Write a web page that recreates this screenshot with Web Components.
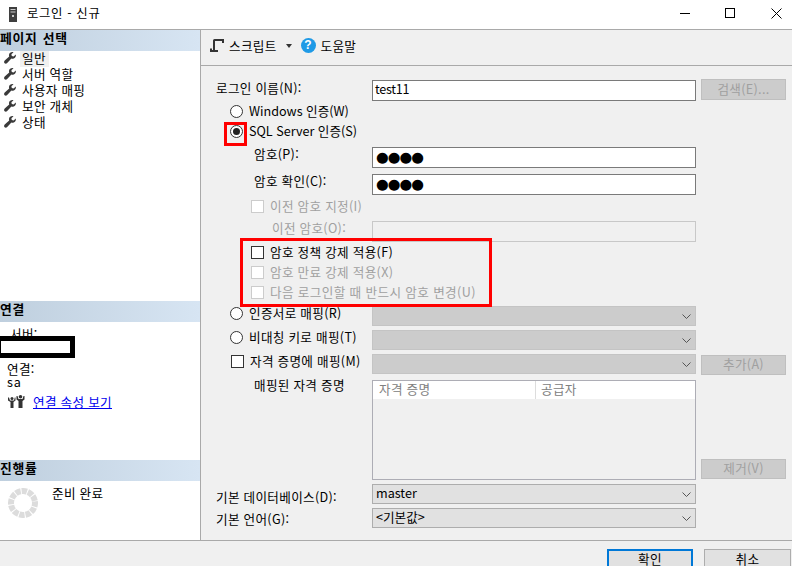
<!DOCTYPE html>
<html lang="ko"><head><meta charset="utf-8"><title>로그인 - 신규</title>
<style>
html,body{margin:0;padding:0;background:#fff}
body{font:12.6px/16px "Noto Sans CJK KR","Noto Sans",sans-serif;letter-spacing:.3px;color:#000;width:792px;height:566px;overflow:hidden}
span[slot=label]{display:block}
</style></head><body>
<login-dialog>
  <title-bar slot="title">로그인 - 신규</title-bar>
  <side-panel slot="side">
    <side-section slot="pages" heading="페이지 선택" style="height:271px">
      <page-item selected>일반</page-item>
      <page-item>서버 역할</page-item>
      <page-item>사용자 매핑</page-item>
      <page-item>보안 개체</page-item>
      <page-item>상태</page-item>
    </side-section>
    <side-section slot="conn" heading="연결" style="height:159px">
      <conn-info></conn-info>
    </side-section>
    <side-section slot="prog" heading="진행률" style="height:80px">
      <progress-info>준비 완료</progress-info>
    </side-section>
  </side-panel>
  <tool-bar slot="toolbar"></tool-bar>
  <login-form slot="form">
    <form-row style="--h:21px;--m:0px;--t:0px">
      <span slot="label">로그인 이름(N):</span>
      <text-box slot="control" style="letter-spacing:-.3px">test11</text-box>
      <dlg-button slot="action" disabled style="--bh:21px;margin-top:-1px">검색(E)...</dlg-button>
    </form-row>
    <form-row style="--h:20px;--m:1px;--t:1px"><radio-opt slot="label" style="margin-left:14px;letter-spacing:0">Windows 인증(W)</radio-opt></form-row>
    <form-row style="--h:20px;--m:0px;--t:1px">
      <radio-opt slot="label" checked marked style="margin-left:14px;letter-spacing:0">SQL Server 인증(S)</radio-opt>
    </form-row>
    <form-row style="--h:21px;--m:5px;--t:-1px">
      <span slot="label" style="margin-left:38px">암호(P):</span>
      <text-box slot="control" dots>●●●●</text-box>
    </form-row>
    <form-row style="--h:21px;--m:6px;--t:-1px">
      <span slot="label" style="margin-left:38px">암호 확인(C):</span>
      <text-box slot="control" dots>●●●●</text-box>
    </form-row>
    <form-row style="--h:20px;--m:1px;--t:2px"><check-opt slot="label" disabled style="margin-left:35px">이전 암호 지정(I)</check-opt></form-row>
    <form-row style="--h:21px;--m:5px;--t:-1px">
      <span slot="label" style="margin-left:56px;color:#a0a0a0">이전 암호(O):</span>
      <text-box slot="control" disabled></text-box>
    </form-row>
    <policy-group style="--m:1px">
      <form-row style="--h:20px;--m:0px;--t:1px"><check-opt slot="label" style="margin-left:35px">암호 정책 강제 적용(F)</check-opt></form-row>
      <form-row style="--h:20px;--m:0px;--t:1px"><check-opt slot="label" disabled style="margin-left:35px">암호 만료 강제 적용(X)</check-opt></form-row>
      <form-row style="--h:20px;--m:0px;--t:1px"><check-opt slot="label" disabled style="margin-left:35px;letter-spacing:.38px">다음 로그인할 때 반드시 암호 변경(U)</check-opt></form-row>
    </policy-group>
    <form-row style="--h:20px;--m:3px;--t:-1px">
      <radio-opt slot="label" style="margin-left:14px">인증서로 매핑(R)</radio-opt>
      <drop-box slot="control" disabled></drop-box>
    </form-row>
    <form-row style="--h:20px;--m:4px;--t:-1px">
      <radio-opt slot="label" style="margin-left:14px">비대칭 키로 매핑(T)</radio-opt>
      <drop-box slot="control" disabled></drop-box>
    </form-row>
    <form-row style="--h:20px;--m:4px;--t:-1px">
      <check-opt slot="label" style="margin-left:15px">자격 증명에 매핑(M)</check-opt>
      <drop-box slot="control" disabled></drop-box>
      <dlg-button slot="action" disabled style="--bh:20px;margin-top:1px">추가(A)</dlg-button>
    </form-row>
    <form-row style="--h:100px;--m:6px;--t:-3px">
      <span slot="label" style="margin-left:38px">매핑된 자격 증명</span>
      <cred-list slot="control"></cred-list>
      <dlg-button slot="action" disabled style="--bh:20px;margin-top:79px">제거(V)</dlg-button>
    </form-row>
    <form-row style="--h:20px;--m:4px;--t:5px">
      <span slot="label">기본 데이터베이스(D):</span>
      <drop-box slot="control">master</drop-box>
    </form-row>
    <form-row style="--h:20px;--m:4px;--t:3px">
      <span slot="label">기본 언어(G):</span>
      <drop-box slot="control">&lt;기본값&gt;</drop-box>
    </form-row>
  </login-form>
  <foot-bar slot="foot">
    <dlg-button primary style="--bh:24px;--lh:16px;width:86px">확인</dlg-button>
    <dlg-button style="--bh:24px;--lh:18px;width:87px">취소</dlg-button>
  </foot-bar>
</login-dialog>
<script>
function def(name, css, html){
  customElements.define(name, class extends HTMLElement{
    constructor(){super();const r=this.attachShadow({mode:'open'});
      const h=typeof html==='function'?html(this):html;
      r.innerHTML='<style>'+css+'</style>'+h;}
  });
}

def('login-dialog',
 ':host{display:grid;width:792px;height:566px;grid-template-columns:201px 591px;grid-template-rows:30px 36px 474px 26px;overflow:hidden;background:#f0f0f0}'+
 '.t{grid-column:1/3}.s{grid-row:2/4;display:block}.f{grid-column:1/3}',
 '<div class="t"><slot name="title"></slot></div><div class="s"><slot name="side"></slot></div><div><slot name="toolbar"></slot></div><div><slot name="form"></slot></div><div class="f"><slot name="foot"></slot></div>');

def('title-bar',
 ':host{display:flex;align-items:center;height:30px;box-sizing:border-box;background:#fff;border-bottom:1px solid #a9a9a9}'+
 'svg.i{margin:0 10px 1px 9px;flex:none}.x{margin-bottom:3px;flex:1;font-size:12.4px;letter-spacing:.65px}.c{display:flex;flex:none;margin:0 10px 3px 0;gap:35px;align-items:center}',
 '<svg class="i" width="8" height="15" viewBox="0 0 8 15"><rect width="8" height="15" fill="#3f3f3f"/><rect x="1.500" y="2" width="5" height="1" fill="#ccc"/><rect x="1.500" y="4.500" width="5" height="1" fill="#ccc"/><rect x="3" y="8" width="2" height="2" fill="#ccc"/></svg>'+
 '<span class="x"><slot></slot></span><span class="c">'+
 '<svg width="10" height="10"><path d="M0 5.500h10" stroke="#000"/></svg>'+
 '<svg width="10" height="10"><rect x=".5" y=".5" width="9" height="9" fill="none" stroke="#000"/></svg>'+
 '<svg width="11" height="11" style="margin-left:1px"><path d="M.5.5l10 10M10.500.5l-10 10" stroke="#000" fill="none"/></svg></span>');

def('side-panel',
 ':host{display:flex;flex-direction:column;width:201px;height:510px;box-sizing:border-box;background:#fff;border-right:1px solid #a9a9a9}',
 '<slot name="pages"></slot><slot name="conn"></slot><slot name="prog"></slot>');

def('side-section',
 ':host{display:block;overflow:hidden}'+
 'h2{margin:0;height:21px;font:700 12.8px/15px "Noto Sans CJK KR",sans-serif;letter-spacing:.7px;word-spacing:1px;background:linear-gradient(90deg,#bfcfde,#d7e5f3);overflow:hidden;white-space:nowrap}',
 el=>'<h2>'+el.getAttribute('heading')+'</h2><slot></slot>');

def('page-item',
 ':host{display:flex;align-items:center;height:16px;padding-left:4px;white-space:nowrap}'+
 'svg{flex:none;margin:0 4px 2px 0}.x{padding:0 3px 2px 2px;line-height:14px}:host([selected]) .x{background:#f0f0f0}',
 '<svg width="12" height="12" viewBox="0 0 12 12"><path fill="#3a3a3a" d="M11.800 2.400 9.600 4.500 7.800 4 7.400 2.300 9.500.2C7.500-.4 5.300.7 5 2.800c-.1.6 0 1.100.2 1.600L.7 8.600c-.8.800-.8 1.900-.1 2.600.7.700 1.800.7 2.600-.2l4.200-4.400c.5.2 1.100.3 1.700.2 2-.3 3.200-2.400 2.700-4.400Z"/></svg><span class="x"><slot></slot></span>');

def('conn-info',
 ':host{display:block;position:relative;height:138px;line-height:13px}'+
 '.a{padding:5px 0 0 10px;height:37px;box-sizing:border-box;overflow:hidden}.b{padding:3px 0 0 7px}'+
 '.cover{position:absolute;left:0;top:14px;width:69px;height:12px;border:5px solid #000;border-left-width:1px;background:#fff}'+
 '.l{display:flex;align-items:center;gap:8px;padding:6px 0 0 8px}a{color:#0000ee;text-decoration:underline}svg{margin-top:1px}',
 '<div class="a">서버:</div><div class="cover"></div><div class="b">연결:<br><span style="letter-spacing:.8px">sa</span></div>'+
 '<div class="l"><svg width="17" height="13" viewBox="0 0 17 13" fill="#333"><circle cx="12.500" cy="1.800" r="1.800"/><path d="M8.500 1h1l1 3h4l1-3h1v3.500l-2 1.500v7h-4V6l-2-1.500z"/><circle cx="4" cy="3.500" r="1.500"/><path d="M0 2.500h1l1 3h4l.8-3h.7v3l-2 1.500v6h-3V7L0 5.500z"/></svg><a href="#">연결 속성 보기</a></div>');

def('progress-info',
 ':host{display:flex;padding:4px 0 0 8px;gap:14px}',
 '<svg width="30" height="30" viewBox="0 0 30 30" style="margin-top:3px;flex:none"><circle cx="15" cy="15" r="12" fill="none" stroke="#dcdcdc" stroke-width="6" stroke-dasharray="5.283 1" transform="rotate(-8 15 15)"/></svg><span><slot></slot></span>');

def('tool-bar',
 ':host{display:flex;align-items:center;height:36px;box-sizing:border-box;border-bottom:1px solid #a9a9a9;padding:0 0 4px 9px;background:#f0f0f0}'+
 '.hp{width:15px;height:15px;border-radius:50%;background:#1f9ae6;color:#fff;font:700 12px/15px "Liberation Sans",sans-serif;text-align:center;margin:0 5px 0 9px}'+
 '.ar{width:0;height:0;border:3.500px solid transparent;border-top:4px solid #333;border-bottom:0;margin-left:9px}',
 '<svg width="14" height="13" viewBox="0 0 14 13" fill="none" stroke="#333" stroke-width="2"><path d="M4 12V1.500C4 1.200 4.200 1 4.500 1H13v3"/><path d="M1 9.500V12h7"/></svg>'+
 '<span style="margin-left:5px">스크립트</span><span class="ar"></span><span class="hp">?</span><span>도움말</span>');

def('login-form',
 ':host{display:block;padding:14px 0 0 15px;height:474px;box-sizing:border-box}','<slot></slot>');

def('form-row',
 ':host{display:grid;grid-template-columns:156px 324px 90px;height:var(--h);margin-top:var(--m)}'+
 '.l{margin-top:var(--t);white-space:nowrap;min-width:0}.cc{min-width:0}.ac{grid-column:3;margin-left:5px}',
 '<div class="l"><slot name="label"></slot></div><div class="cc"><slot name="control"></slot></div><div class="ac"><slot name="action"></slot></div>');

def('policy-group',
 ':host{display:block;position:relative;margin-top:var(--m)}'+
 '.box{position:absolute;left:24px;top:-5px;width:252px;height:69px;box-sizing:border-box;border:3px solid #f00;pointer-events:none}',
 '<slot></slot><div class="box"></div>');

def('text-box',
 ':host{display:block;height:21px;box-sizing:border-box;border:1px solid #7a7a7a;background:#fff;padding:0 2px;line-height:15px;overflow:hidden;letter-spacing:0}'+
 ':host([disabled]){background:#f0f0f0;border-color:#c8c8c8}'+
 ':host([dots]){font:14.600px/17px "DejaVu Sans",sans-serif;letter-spacing:-1px;padding-left:3px}',
 '<slot></slot>');

def('drop-box',
 ':host{display:flex;align-items:center;justify-content:space-between;height:20px;box-sizing:border-box;border:1px solid #adadad;background:#e1e1e1;padding:0 3px;letter-spacing:0}'+
 ':host([disabled]){background:#ccc;border-color:#c4c4c4}'+
 'span{line-height:16px;margin-top:-2px}svg{flex:none;margin-right:1px}',
 '<span><slot></slot></span><svg width="9" height="5" viewBox="0 0 9 5" fill="none" stroke="#555"><path d="M.5.500l4 4 4-4"/></svg>');

def('dlg-button',
 ':host{display:block;height:var(--bh);box-sizing:border-box;border:1px solid #adadad;background:#e1e1e1;text-align:center;line-height:var(--lh,calc(var(--bh) - 4px));overflow:hidden;white-space:nowrap}'+
 ':host([disabled]){background:#ccc;border-color:#bfbfbf;color:#a0a0a0}'+
 ':host([primary]){border:2px solid #0078d7}',
 '<slot></slot>');

def('radio-opt',
 ':host{display:flex;align-items:center;gap:6px;position:relative;white-space:nowrap}'+
 'svg{flex:none}.m{position:absolute;left:-6px;top:-1px;width:23px;height:24px;box-sizing:border-box;border:3px solid #f00}',
 el=>'<svg width="13" height="13" viewBox="0 0 13 13" style="margin-top:1px"><circle cx="6.500" cy="6.500" r="6" fill="#fff" stroke="#333"/>'+(el.hasAttribute('checked')?'<circle cx="6.500" cy="6.500" r="3.500" fill="#222"/>':'')+'</svg><span><slot></slot></span>'+(el.hasAttribute('marked')?'<div class="m"></div>':''));

def('check-opt',
 ':host{display:flex;align-items:center;gap:6px;white-space:nowrap}'+
 '.b{flex:none;width:13px;height:13px;box-sizing:border-box;border:1px solid #333;background:#fff}'+
 ':host([disabled]){color:#a0a0a0}:host([disabled]) .b{border-color:#ccc}',
 '<div class="b"></div><span><slot></slot></span>');

def('cred-list',
 ':host{display:block;height:100px;box-sizing:border-box;border:1px solid #adadb5;background:#f0f0f0;color:#808080}'+
 '.h{display:grid;grid-template-columns:162px 1fr;background:#fff;height:18px;line-height:15px}'+
 '.h span{padding-left:6px}.h span+span{border-left:1px solid #ddd;padding-left:5px}',
 '<div class="h"><span>자격 증명</span><span>공급자</span></div>');

def('foot-bar',
 ':host{display:flex;justify-content:flex-end;gap:11px;height:26px;box-sizing:border-box;border-top:1px solid #a9a9a9;padding:8px 1px 0 0;background:#f0f0f0;overflow:hidden}','<slot></slot>');
</script>
</body></html>
